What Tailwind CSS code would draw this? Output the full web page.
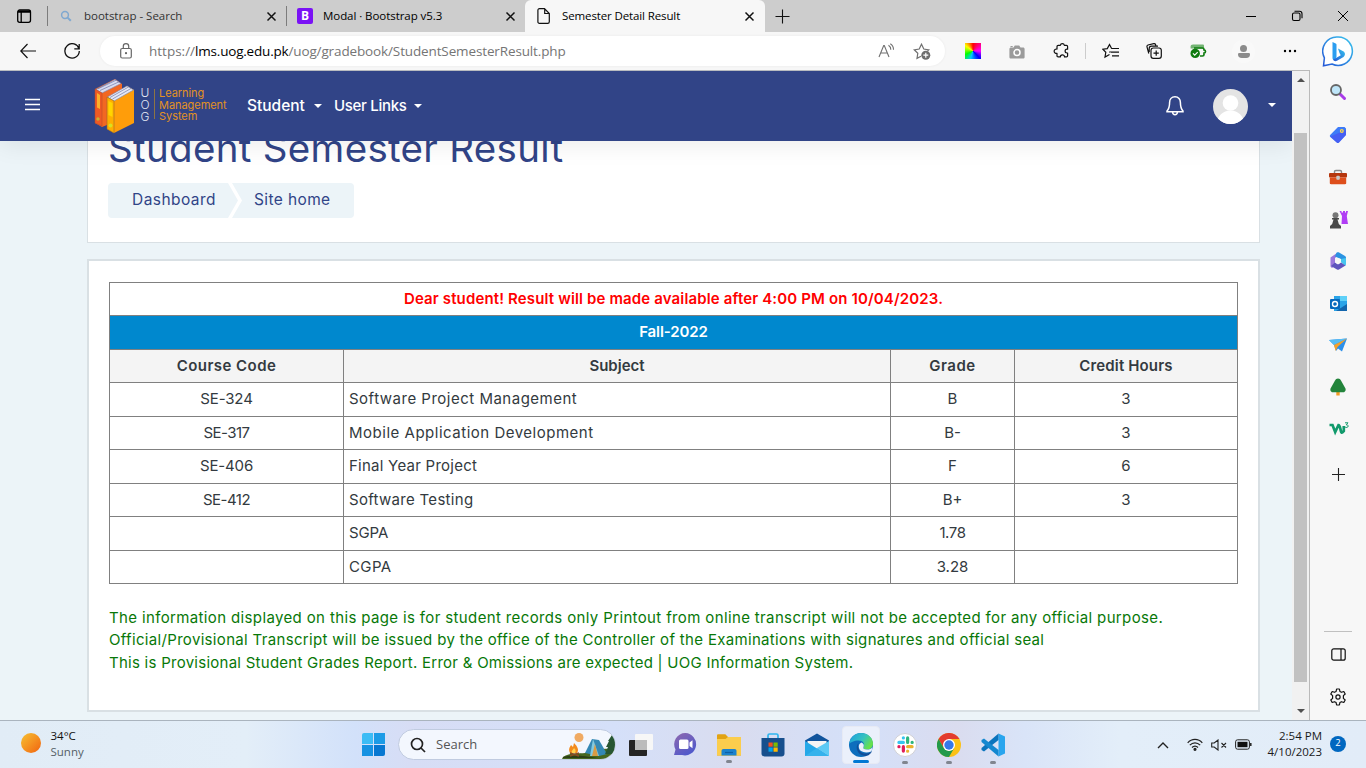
<!DOCTYPE html>
<html lang="en">
<head>
<meta charset="utf-8">
<title>Semester Detail Result</title>
<script src="https://cdn.jsdelivr.net/npm/@tailwindcss/browser@4"></script>
</head>
<body class="flex h-[768px] w-[1366px] flex-col overflow-hidden bg-[#f7f7f7] font-['Open_Sans',sans-serif] text-black">

<!-- Tab strip -->
<div class="flex h-8 shrink-0 bg-[#cdcdcd] text-[11.5px] whitespace-nowrap">
  <div class="flex w-[47px] items-center pl-4">
    <svg class="size-4" viewBox="0 0 16 16" fill="none" stroke="#000" stroke-width="1.3"><rect x="1.7" y="2" width="12.8" height="12.3" rx="2"/><path d="M2 4h12.4M2 3.2h12.4M5.2 4v10" /></svg>
  </div>
  <div class="my-1.5 w-px bg-[#7c7c7c]"></div>
  <div class="flex w-[238px] items-center">
    <svg class="ml-3 size-3" viewBox="0 0 12 12" fill="none" stroke="#7fa8d0" stroke-width="1.5"><circle cx="5" cy="5" r="3.4"/><path d="M7.6 7.6l3.2 3.2" stroke-width="2"/></svg>
    <span class="ml-3 w-[182px] tracking-[-0.02px] text-[#333]">bootstrap - Search</span>
    <svg class="size-[11px]" viewBox="0 0 11 11" stroke="#111" stroke-width="1.5"><path d="M1.5 1.5l8 8M9.5 1.5l-8 8"/></svg>
  </div>
  <div class="my-1.5 w-px bg-[#7c7c7c]"></div>
  <div class="flex w-[238px] items-center">
    <div class="ml-2.5 flex size-4 items-center justify-center rounded-[2px] bg-[#7a12f5] text-[12px] font-bold text-white">B</div>
    <span class="ml-2.5 w-[182px] tracking-[-0.06px]">Modal · Bootstrap v5.3</span>
    <svg class="size-[11px]" viewBox="0 0 11 11" stroke="#111" stroke-width="1.5"><path d="M1.5 1.5l8 8M9.5 1.5l-8 8"/></svg>
  </div>
  <div class="flex w-[240px] items-center rounded-t-md bg-[#f7f7f7]">
    <svg class="ml-3 h-4 w-[13px]" viewBox="0 0 13 16" fill="none" stroke="#111" stroke-width="1.2"><path d="M2.5.7h5L12.3 5.5v8.2c0 1-.6 1.6-1.6 1.6H2.5c-1 0-1.6-.6-1.6-1.6V2.3C.9 1.3 1.5.7 2.5.7zM7.7.9v4.6h4.4"/></svg>
    <span class="ml-3 w-[182px] tracking-[-0.12px]">Semester Detail Result</span>
    <svg class="size-[11px]" viewBox="0 0 11 11" stroke="#111" stroke-width="1.5"><path d="M1.5 1.5l8 8M9.5 1.5l-8 8"/></svg>
  </div>
  <div class="flex flex-1 items-center pl-[10px]">
    <svg class="size-[15px]" viewBox="0 0 15 15" stroke="#111" stroke-width="1.1"><path d="M7.5.5v14M.5 7.5h14"/></svg>
  </div>
  <div class="flex items-center pr-[17px]">
    <svg class="size-3" viewBox="0 0 12 12" stroke="#000" stroke-width="1"><path d="M1 6.5h10"/></svg>
    <svg class="ml-[34px] size-3" viewBox="0 0 12 12" fill="none" stroke="#000" stroke-width="1.1"><rect x="1.5" y="3" width="7.5" height="7.5" rx="1.5"/><path d="M3.5 1.2h5c1.6 0 2.5 1 2.5 2.5v4.5"/></svg>
    <svg class="ml-[34px] size-3" viewBox="0 0 12 12" stroke="#000" stroke-width="1"><path d="M1 1l10 10M11 1L1 11"/></svg>
  </div>
</div>

<!-- Toolbar -->
<div class="flex h-[38px] shrink-0 items-center bg-[#f7f7f7]">
  <svg class="ml-5 size-4" viewBox="0 0 16 16" fill="none" stroke="#111" stroke-width="1.2"><path d="M7.5 1L.8 8l6.7 7M.8 8H16"/></svg>
  <svg class="ml-7 size-4" viewBox="0 0 16 16" fill="none" stroke="#111" stroke-width="1.3"><path d="M15 5.8A7.2 7.2 0 1 0 15.3 8M15.2 1v4.9h-4.9"/></svg>
  <div class="ml-5 flex h-[30px] w-[845px] items-center rounded-full bg-white shadow-[0_0_3px_rgba(0,0,0,0.06)]">
    <svg class="ml-5 h-4 w-3" viewBox="0 0 12 16" fill="none" stroke="#666" stroke-width="1.2"><rect x=".7" y="5.5" width="10.6" height="9.5" rx="1.5"/><path d="M3.3 5.5V3.3a2.7 2.7 0 0 1 5.4 0v2.2"/><circle cx="6" cy="10.2" r=".5" fill="#666"/></svg>
    <div class="ml-[17px] w-[729px] text-[13.5px] whitespace-nowrap text-[#757575]"><span>https://</span><span class="tracking-[-0.2px] text-black">lms.uog.edu.pk</span><span class="tracking-[-0.13px]">/uog/gradebook/StudentSemesterResult.php</span></div>
    <svg class="h-4 w-[17px]" viewBox="0 0 17 16" fill="none" stroke="#707070" stroke-width="1.1"><path d="M1 14L5.7 2.5h.6L11 14M2.7 10h6.6M10.5 2.2a5 5 0 0 1 2.3 4.5M12.3.7a7 7 0 0 1 3.2 6"/></svg>
    <svg class="ml-[18px] h-[17px] w-[18px]" viewBox="0 0 18 17" fill="none" stroke="#707070" stroke-width="1.2"><path d="M8 13.2L4 15.3l.8-5L1.2 6.8l5-.8L8.5 1.2 10.8 6l5 .8-1.3 1.3"/><circle cx="12.8" cy="12.2" r="4.5" fill="#6d6d6d" stroke="none"/><path d="M12.8 9.7v5M10.3 12.2h5" stroke="#fff"/></svg>
  </div>
  <div class="ml-[6px] flex items-center">
    <div class="flex w-11 justify-center"><div class="size-4 bg-[conic-gradient(#f00,#f0f_25%,#00f_38%,#0cf_55%,#0f0_68%,#ff0_85%,#f00)]"></div></div>
    <div class="flex w-11 justify-center"><svg class="h-[15px] w-4" viewBox="0 0 16 15"><path fill="#9b9b9b" d="M2 3.5h2.5L5.8 1.5h4.4l1.3 2H14c1 0 1.6.6 1.6 1.5v8c0 1-.6 1.5-1.6 1.5H2c-1 0-1.6-.5-1.6-1.5V5c0-.9.6-1.5 1.6-1.5zM1.5 2h2.2v1H1.5z"/><circle cx="8" cy="8.6" r="3" fill="#9b9b9b" stroke="#fff" stroke-width="1.5"/></svg></div>
    <div class="flex w-11 justify-center"><svg class="size-4" viewBox="0 0 16 16" fill="none" stroke="#111" stroke-width="1.2" stroke-linejoin="round"><path d="M4 3.5c0-.8.4-1.2 1.2-1.2H7.3a2.1 2.1 0 0 1 4.1 0h2c.8 0 1.2.4 1.2 1.2v2.7h-.6a1.9 1.9 0 0 0 0 3.8h.6v2.7c0 .8-.4 1.2-1.2 1.2h-1.900a2.100 2.100 0 0 0-4.200 0H5.200c-.8 0-1.200-.4-1.200-1.200V10.300a2.200 2.200 0 1 1 0-4.200z"/></svg></div>
    <div class="flex w-[5px] justify-center"><div class="h-4 w-px bg-[#ccc]"></div></div>
    <div class="flex w-11 justify-center"><svg class="h-4 w-[17px]" viewBox="0 0 17 16" fill="none" stroke="#111" stroke-width="1.2"><path d="M7.5 11.5L3 14l.8-4.7L.8 6.2l4.5-.6L7.5 1.5l2.1 4M9.5 5.5H17M9 9.2h8M10 12.8h7M7.5 9.5l1-1"/></svg></div>
    <div class="flex w-11 justify-center"><svg class="size-4" viewBox="0 0 16 16" fill="none" stroke="#111" stroke-width="1.2"><rect x="5" y="5" width="10.3" height="10.3" rx="2.3"/><path d="M10.2 7.5v5.3M7.5 10.2h5.3M2.8 10.5L1 3.8C.8 2.9 1.2 2.3 2 2L7.8.7c.9-.2 1.5.2 1.8 1l.5 1.6M3.2 9V5.5c0-1.5.8-2.3 2.3-2.3H12"/></svg></div>
    <div class="flex w-11 justify-center"><svg class="h-4 w-[17px]" viewBox="0 0 17 16"><path d="M3 1.5h9.5c1 0 1.5.5 1.5 1.4v2.6H.6V3.5c0-1.3.9-2 2.4-2z" fill="#73b473"/><path d="M4 5h8.5c1 0 1.5.5 1.5 1.5V7c2 0 2 3 0 3v1.5c0 1-.5 1.5-1.5 1.5H10" fill="none" stroke="#107c10" stroke-width="1.7"/><circle cx="5.2" cy="10.4" r="4.7" fill="#107c10"/><path d="M3 10.4l1.7 1.7 3-3" fill="none" stroke="#fff" stroke-width="1.2"/></svg></div>
    <div class="flex w-[47px] justify-center"><div class="flex size-[23px] flex-col items-center justify-center gap-px rounded-full bg-[#f9f9f9]"><div class="size-[7px] rounded-full bg-[#8c8c8c]"></div><div class="h-[5px] w-3 rounded-t-xs rounded-b-md bg-[#8c8c8c]"></div></div></div>
    <div class="flex w-[46px] justify-center"><svg class="h-1 w-[14px]" viewBox="0 0 14 4"><circle cx="2" cy="2" r="1.2"/><circle cx="7" cy="2" r="1.2"/><circle cx="12" cy="2" r="1.2"/></svg></div>
  </div>
  <svg class="ml-[9px] h-[33px] w-[32px] shrink-0" viewBox="0 0 32 33"><defs><linearGradient id="bg1" x1="1" y1="0" x2="0" y2="1"><stop offset="0" stop-color="#38c5ee"/><stop offset="1" stop-color="#2456d6"/></linearGradient></defs><path d="M16 2a14.200 14.200 0 1 1-6 27L1.500 30.800l.9-8A14.200 14.200 0 0 1 16 2z" fill="#fff" stroke="url(#bg1)" stroke-width="1.5"/><path d="M10.500 7l3.200 1.500c.6.3.8.6.8 1.200V22l-1.500 3.500c-1.500 0-2.500-1-2.500-2.500z" fill="#2b9df0"/><path d="M16 13.500l5.200 2.800c2.300 1.300 2.300 4.300.3 5.600L15 25.800c-1.700.9-3 .3-4-1l7.800-4.600-1.300-2.200z" fill="url(#bg1)"/></svg>
</div>

<div class="flex h-[650px] shrink-0">
  <!-- Page -->
  <div class="flex h-[650px] w-[1292px] flex-col overflow-hidden border-t border-[#b9bcc0] bg-[#ecf4f8] font-['Inter',sans-serif] text-[15px] leading-[22.5px]">
    <div class="relative z-10 flex h-[70px] shrink-0 items-center bg-[#314487] text-white shadow-[0_4px_24px_rgba(0,0,0,0.08)]">
      <svg class="mb-[3px] ml-[25px] h-[13px] w-[15px]" viewBox="0 0 15 13" stroke="#fff" stroke-width="1.4"><path d="M0 1.5h15M0 6.5h15M0 11.5h15"/></svg>
      <svg class="ml-[54px] h-[56px] w-[41px]" viewBox="0 0 41 56">
        <path d="M1 11L21 1l7 5v35L8 49l-7-4z" fill="#f26722"/><path d="M2 11.5L21 1.5l6 4L8 15z" fill="#d9dcef" stroke="#7b83ae" stroke-width=".6"/><path d="M4 10.8L22.5 2M6 12.5L25 3.8" stroke="#6f79aa" stroke-width=".7"/>
        <path d="M1 11l7 4v33l-7-3z" fill="#ee5a24" stroke="#b34a2b" stroke-width=".5"/><path d="M3 15l3 2v14l-3-1.5z" fill="#fbb12a"/>
        <path d="M13 20L33 8l7 4v33L20 55l-7-4z" fill="#ff9d0a"/><path d="M13.5 19L33 8l6.5 4L20 23z" fill="#e5e8f5" stroke="#7b83ae" stroke-width=".6"/><path d="M16 19.5L34.5 9M18.5 21L37 10.5" stroke="#6f79aa" stroke-width=".7"/>
        <path d="M13 19l7 4v32l-7-4z" fill="#ffae00" stroke="#9a6a2a" stroke-width=".6"/><path d="M14.5 23l4 2v14l-4-2z" fill="#ffd500"/><circle cx="4" cy="41" r="1.7" fill="#c9b032"/><circle cx="16.5" cy="47.5" r="2" fill="#d9e021"/>
      </svg>
      <div class="mb-[2px] ml-[4px] flex w-3 flex-col items-center text-[12px] leading-[12px] font-light text-[#e3e6f3]"><span>U</span><span>O</span><span>G</span></div>
      <div class="mb-1 ml-[3px] h-[30px] w-px bg-[#8d7444]"></div>
      <div class="mb-px ml-[4px] flex w-[70px] flex-col text-[11px] leading-[11.7px] tracking-[-0.05px] text-[#e3921f]"><span>Learning</span><span>Management</span><span>System</span></div>
      <div class="ml-[18px] flex shrink-0 items-center font-medium">
        <span class="w-[67px] text-[15.5px]">Student</span>
        <span class="border-x-4 border-t-4 border-x-transparent border-t-white"></span>
        <span class="ml-[12px] w-[80px] tracking-[-0.3px]">User Links</span>
        <span class="border-x-4 border-t-4 border-x-transparent border-t-white"></span>
      </div>
      <svg class="ml-[744px] h-5 w-[18px] shrink-0" viewBox="0 0 18 20" fill="none" stroke="#fff" stroke-width="1.5"><path d="M9 .8C5.5.8 3.600 3.500 3.600 6.500c0 5-1 6.800-2.600 8.500v.7h16V15c-1.600-1.700-2.600-3.500-2.600-8.500C14.400 3.500 12.500.8 9 .8zM6.500 16c.2 1.800 1.200 2.700 2.500 2.700s2.300-.9 2.500-2.700"/></svg>
      <svg class="ml-[29px] size-[35px] shrink-0" viewBox="0 0 35 35"><defs><clipPath id="av"><circle cx="17.5" cy="17.5" r="17.5"/></clipPath></defs><g clip-path="url(#av)"><path fill="#e4e4e4" d="M0 0h35v35H0z"/><circle cx="17.5" cy="14" r="7.8" fill="#fff"/><path d="M4 35c0-8 6-13.500 13.500-13.500S31 27 31 35z" fill="#fff"/></g></svg>
      <span class="mb-[3px] ml-5 border-x-4 border-t-4 border-x-transparent border-t-white"></span>
    </div>

    <div class="mx-[87px] h-[102px] w-[1173px] shrink-0 border border-t-0 border-[#d9e0e4] bg-white px-5">
      <h1 class="-mt-[18px] h-[60px] text-[38.5px] leading-[50px] tracking-[0.32px] text-[#314487]">Student Semester Result</h1>
      <div class="flex h-[35px] text-[15.5px] text-[#314487]">
        <div class="flex w-[130px] items-center rounded-l-sm bg-[#ecf4f8] pl-6 tracking-[0.45px] [clip-path:polygon(0_0,120px_0,100%_50%,120px_100%,0_100%)]">Dashboard</div>
        <div class="-ml-[6px] flex w-[122px] items-center rounded-r-sm bg-[#ecf4f8] pl-[22px] tracking-[0.38px] [clip-path:polygon(0_0,100%_0,100%_100%,0_100%,10px_50%)]">Site home</div>
      </div>
    </div>

    <div class="mx-[87px] mt-[16px] h-[453px] w-[1173px] shrink-0 border-2 border-[#d9e0e4] bg-white px-5 pt-[21px] text-[#333a40]">
      <table class="w-[1128px] table-fixed border-collapse text-center [&_td]:border [&_td]:border-[#808080] [&_td]:p-0 [&_th]:border [&_th]:border-[#808080] [&_th]:p-0 [&_th]:font-semibold">
        <colgroup><col class="w-[234px]"><col class="w-[547px]"><col class="w-[124px]"><col class="w-[223px]"></colgroup>
        <tr class="h-[33px]"><th colspan="4" class="tracking-[0.14px] text-[#f00]">Dear student! Result will be made available after 4:00 PM on 10/04/2023.</th></tr>
        <tr class="h-[34px] bg-[#0088ce] text-white"><th colspan="4" class="border-t-[#0088ce]! tracking-[-0.1px]">Fall-2022</th></tr>
        <tr class="h-[33px] bg-[#f4f4f4]"><th class="tracking-[0.45px]">Course Code</th><th>Subject</th><th class="tracking-[0.5px]">Grade</th><th class="tracking-[0.15px]">Credit Hours</th></tr>
        <tr class="h-[34px]"><td class="tracking-[-0.15px]">SE-324</td><td class="pl-[5px]! text-left tracking-[0.5px]">Software Project Management</td><td>B</td><td>3</td></tr>
        <tr class="h-[33px]"><td class="tracking-[-0.5px]">SE-317</td><td class="pl-[5px]! text-left tracking-[0.51px]">Mobile Application Development</td><td>B-</td><td>3</td></tr>
        <tr class="h-[34px]"><td class="tracking-[-0.15px]">SE-406</td><td class="pl-[5px]! text-left tracking-[0.25px]">Final Year Project</td><td>F</td><td>6</td></tr>
        <tr class="h-[33px]"><td class="tracking-[-0.5px]">SE-412</td><td class="pl-[5px]! text-left tracking-[0.3px]">Software Testing</td><td>B+</td><td>3</td></tr>
        <tr class="h-[34px]"><td></td><td class="pl-[5px]! text-left tracking-[-0.1px]">SGPA</td><td class="tracking-[-0.4px]">1.78</td><td></td></tr>
        <tr class="h-[33px]"><td></td><td class="pl-[5px]! text-left tracking-[0.4px]">CGPA</td><td>3.28</td><td></td></tr>
      </table>
      <div class="mt-[22.5px] whitespace-nowrap text-[#087808]">
        <p class="tracking-[0.365px]">The information displayed on this page is for student records only Printout from online transcript will not be accepted for any official purpose.</p>
        <p class="tracking-[0.327px]">Official/Provisional Transcript will be issued by the office of the Controller of the Examinations with signatures and official seal</p>
        <p class="tracking-[0.26px]">This is Provisional Student Grades Report. Error &amp; Omissions are expected | UOG Information System.</p>
      </div>
    </div>
  </div>

  <!-- Scrollbar -->
  <div class="flex w-[18px] flex-col border-t border-r border-[#b9b9b9] bg-[#f1f1f1]">
    <div class="flex h-[18px] items-center justify-center"><span class="border-x-4 border-b-4 border-x-transparent border-b-[#505050]"></span></div>
    <div class="mt-11 ml-0.5 h-[549px] w-[13px] bg-[#c1c1c1]"></div>
    <div class="flex flex-1 items-end justify-center pb-[7px]"><span class="border-x-4 border-t-4 border-x-transparent border-t-[#505050]"></span></div>
  </div>

  <!-- Sidebar -->
  <div class="flex w-[56px] flex-col items-center pt-px">
    <div class="flex h-[42px] items-center"><svg class="size-[18px]" viewBox="0 0 18 18"><path d="M11 11l4.5 4.5" stroke="#a83be8" stroke-width="3" stroke-linecap="round"/><circle cx="7" cy="7" r="5" fill="#bfe6f9" stroke="#666" stroke-width="1.8"/></svg></div>
    <div class="flex h-[42px] items-center pt-0.5"><svg class="size-[18px]" viewBox="0 0 18 18"><path d="M9 1h6.500L17 2.500V9l-7 7.500c-.8.7-1.600.7-2.300 0L1.300 11c-.6-.7-.6-1.500.1-2.200z" fill="#3d7bf8"/><path d="M1.300 10.500L17 4v5l-7 7.500c-.8.7-1.600.7-2.300 0z" fill="#4b4cf0" opacity=".6"/><circle cx="12.8" cy="5" r="2" fill="#ffd84a"/><circle cx="12.8" cy="5" r=".8" fill="#4474d8"/></svg></div>
    <div class="flex h-[42px] items-center pt-0.5"><svg class="h-4 w-[18px]" viewBox="0 0 18 16"><path d="M5.500 4.500V2.700C5.500 1.900 6 1.500 6.800 1.500h4.400c.8 0 1.300.4 1.300 1.200v1.800" fill="none" stroke="#888" stroke-width="1.4"/><rect y="4" width="18" height="4.5" rx="1" fill="#b5360d"/><path d="M.8 8.500h16.400V14c0 .8-.4 1.200-1.200 1.200H2c-.8 0-1.200-.4-1.200-1.200z" fill="#de4f1c"/><rect x="7.300" y="6.800" width="3.500" height="4" rx="1" fill="#c8c8c8"/></svg></div>
    <div class="flex h-[42px] items-center pt-0.5"><svg class="size-[19px]" viewBox="0 0 19 19"><path d="M10.500 1h2v1.500H14V1h2v1.500h1V1h2l-1.200 5 .7 5 .5 3h-6.500l.5-8z" fill="#b13df5"/><circle cx="6.500" cy="5.300" r="3" fill="#777"/><path d="M3 8h7v1.500H8.500l1.300 4.500 2.200 2v2.500H1V16l2.200-2 1.300-4.500H3z" fill="#4a4a4a"/></svg></div>
    <div class="flex h-[42px] items-center pt-0.5"><svg class="size-[18px]" viewBox="0 0 18 18"><path d="M1.500 5.500L8 1l3 1-5 4v7.500l-3 2.500-1.500-1.500z" fill="#9b78dd"/><path d="M7.500.8C8.500.2 9.500.2 10.500.8L16 4c.8.5 1 1 1 2v6l-5-2V7L6 4.500z" fill="#2b93e2"/><path d="M17 6v6c0 1-.3 1.500-1 2l-4-4V7z" fill="#46c5ef"/><path d="M16.500 13.500l-6.500 4c-.7.4-1.300.4-2 0L2 14l4-3.500 3 2 3-2z" fill="#5f55bd"/><circle cx="9" cy="9" r="2.8" fill="#f7f7f7"/></svg></div>
    <div class="flex h-[42px] items-center pt-0.5"><svg class="size-[17px]" viewBox="0 0 17 17"><path d="M4 1h13v15H4z" fill="#2aa4e8"/><path d="M10 1h7v5h-7z" fill="#5ed0f8"/><path d="M17 9v7H6z" fill="#1265ad"/><rect y="4" width="10" height="10" rx="1" fill="#0869bd"/><circle cx="5" cy="9" r="2.500" fill="none" stroke="#fff" stroke-width="1.4"/></svg></div>
    <div class="flex h-[42px] items-center pt-0.5"><svg class="h-[14px] w-[18px]" viewBox="0 0 18 14"><path d="M0 2L18 .5 13 13.500 9 10.500 7 13 5 7z" fill="#2c8fea"/><path d="M0 2L18 .5 5 7z" fill="#56bdf5"/><path d="M18 .5L5 7l1.700 6L8.500 9z" fill="#f5a12a"/></svg></div>
    <div class="flex h-[42px] items-center pt-0.5"><svg class="h-[18px] w-4" viewBox="0 0 16 18"><path d="M6.300 13h3.400v4.500H6.300z" fill="#f29b25"/><path d="M8 .5c1.500 0 2.200.8 2.800 1.800l4.400 7.700c1.200 2.200 0 4.300-2.400 4.300H3.200C.8 14.300-.4 12.200.8 10l4.400-7.700C5.800 1.300 6.500.5 8 .5z" fill="#23843b"/></svg></div>
    <div class="flex h-[42px] items-center pt-0.5 pl-0.5"><svg class="h-[14px] w-5" viewBox="0 0 20 14" fill="none" stroke="#129a6c"><path d="M.5 3h3l2.700 7L9.500 3c1.500 0 1.500 3 2.500 6.500.7 2 1.500 1 2.800-.5V4" stroke-width="2.7"/><path d="M16 .8H19l-1.800 2c1.500 0 2 .6 2 1.300 0 1.500-2.500 1.800-3.200.8" stroke-width="1"/></svg></div>
    <div class="flex h-[51px] items-center"><svg class="size-[13px]" viewBox="0 0 13 13" stroke="#222" stroke-width="1.1"><path d="M6.500 0v13M0 6.500h13"/></svg></div>
    <div class="flex-1"></div>
    <div class="h-px w-7 shrink-0 bg-[#c0c0c0]"></div>
    <svg class="mt-[16px] h-[13px] w-[15px] shrink-0" viewBox="0 0 15 13" fill="none" stroke="#111" stroke-width="1.2"><rect x=".8" y=".8" width="13.4" height="11.4" rx="2"/><path d="M10 1v11"/></svg>
    <svg class="mt-[27px] mb-[14px] size-[18px] shrink-0" viewBox="0 0 18 18" fill="none" stroke="#111" stroke-width="1.2" stroke-linejoin="round"><circle cx="9" cy="9" r="2.1"/><path d="M7.600 1h2.800l.5 2.400 1.600.9 2.300-.8 1.400 2.500-1.800 1.600v2.800l1.800 1.600-1.400 2.500-2.300-.8-1.600.9-.5 2.400H7.600l-.5-2.400-1.600-.9-2.300.8L1.800 12l1.800-1.600V7.600L1.800 6l1.400-2.500 2.300.8 1.600-.9z"/></svg>
  </div>
</div>

<!-- Taskbar -->
<div class="flex h-12 shrink-0 items-center border-t border-[#aab4be] bg-[linear-gradient(90deg,#e1ecf6_0,#e3eef8_18%,#d2e1fa_26%,#d7ddf5_30%,#d5e0f9_45%,#d9dcef_54%,#d4e0f9_63%,#dadcef_70%,#d9e4f8_75%,#e3eef9_82%,#e2ecf8_100%)] text-[11.5px] whitespace-nowrap">
  <div class="mb-[3px] ml-[21px] size-5 shrink-0 rounded-full bg-linear-to-br from-[#f4c032] to-[#f0600d]"></div>
  <div class="mb-[2px] ml-[9.5px] w-[300.5px] shrink-0 leading-4"><div class="text-[#111]">34°C</div><div class="text-[#555e66]">Sunny</div></div>
  <div class="flex w-11 shrink-0 justify-center"><div class="grid size-[23px] grid-cols-2 gap-px"><i class="rounded-tl-xs bg-[#3cbcf5]"></i><i class="bg-[#1c9be6]"></i><i class="bg-[#1692e2]"></i><i class="rounded-br-xs bg-[#0777d1]"></i></div></div>
  <div class="ml-[3px] flex h-[31px] w-[218px] shrink-0 items-center overflow-hidden rounded-full border border-[#c0cbe0] bg-[#f3f7fe]">
    <svg class="ml-[11px] size-4 shrink-0" viewBox="0 0 16 16" fill="none" stroke="#222" stroke-width="1.7"><circle cx="7" cy="7" r="5.500"/><path d="M11 11l4 4"/></svg>
    <span class="ml-[10px] w-[126px] shrink-0 text-[13px] text-[#555]">Search</span>
    <svg class="h-[29px] w-[56px] shrink-0" viewBox="0 0 56 29"><path d="M1 27c7-5 16-3 22-4 12-5 24-5 33-3v9H0z" fill="#46671f"/><path d="M1 27c12-3 20-1 35 1H1z" fill="#2b3f15"/><circle cx="17" cy="7.500" r="4.500" fill="#f0aa62"/><path d="M12 13c4 4 5 7 3 10H8c-2-4 0-6 1-8l2 2z" fill="#f38b1d"/><path d="M12 18c2 2 2 3 1 5h-3c-1-2 1-3 2-5z" fill="#ffd252"/><path d="M8 23l9 3M17 23l-9 3" stroke="#884c22" stroke-width="1.5"/><path d="M30 9l7 1 8 14-8 2-14-3z" fill="#3488b4"/><path d="M31 9l6 17h-9z" fill="#83c9df"/><path d="M33 14l3 12h-6z" fill="#d99b44"/><path d="M50 5l5 6h-2l4 6h-3l4 7H43l3-7h-2l3-6h-1z" fill="#275633"/></svg>
  </div>
  <div class="ml-[3px] flex w-11 justify-center"><svg class="h-[22px] w-6" viewBox="0 0 24 22"><rect y="6" width="18" height="16" rx="1" fill="#252525"/><rect x="6" width="18" height="16" rx="1" fill="#f7f7f7"/><path d="M6 6h12v10H6z" fill="#bcbcbc"/></svg></div>
  <div class="flex w-11 justify-center"><svg class="size-[23px]" viewBox="0 0 23 23"><defs><linearGradient id="ch" x2=".6" y2="1"><stop stop-color="#8f68ae"/><stop offset="1" stop-color="#5059cb"/></linearGradient></defs><path d="M11.500 0A11.200 11.200 0 1 1 8 22H0l1.500-5.500A11.200 11.200 0 0 1 11.500 0z" fill="url(#ch)"/><rect x="5" y="6.500" width="9.500" height="9.500" rx="1.5" fill="#fff"/><path d="M15.500 9.500l3-2.200v8l-3-2.200z" fill="#fff"/></svg></div>
  <div class="relative flex w-11 justify-center"><svg class="h-[22px] w-6" viewBox="0 0 24 22"><path d="M0 1.500C0 .7.600.3 1.300.3h7L11 3H24v18.500H0z" fill="#e2a313"/><path d="M0 5h8.500L11 3h13v17.500c0 .7-.4 1-1 1H1c-.6 0-1-.3-1-1z" fill="#fbcd4d"/><path d="M4.500 21.500V17c0-1.300.7-2 2-2h11c1.300 0 2 .7 2 2v4.500z" fill="#1b82ce"/><path d="M8 18.500h8" stroke="#0d5fa5" stroke-width="1.2"/></svg><i class="absolute -bottom-[7px] h-[3px] w-1.5 rounded-full bg-[#81858f]"></i></div>
  <div class="flex w-11 justify-center"><svg class="size-6" viewBox="0 0 24 24"><path d="M7 6V2.500C7 1.500 7.500 1 8.500 1h7c1 0 1.500.5 1.500 1.500V6" fill="none" stroke="#2eb5ef" stroke-width="1.7"/><path d="M.5 5h23v15.500c0 2-1.200 3-3 3h-17c-1.800 0-3-1-3-3z" fill="#174f8d"/><path d="M7.500 9.500h4.200v4.200H7.500z" fill="#f25022"/><path d="M12.500 9.500h4.200v4.200h-4.200z" fill="#7fba00"/><path d="M7.500 14.500h4.200v4.200H7.500z" fill="#00a4ef"/><path d="M12.500 14.500h4.200v4.200h-4.200z" fill="#ffb900"/></svg></div>
  <div class="flex w-11 justify-center"><svg class="size-6" viewBox="0 0 24 24"><path d="M0 7.500L12 .5l12 7v5H0z" fill="#11549c"/><path d="M2.500 8h19v4L12 16l-9.500-4z" fill="#f5f5f5"/><path d="M0 8v15h24z" fill="#25a8e8"/><path d="M24 8v15L12 15z" fill="#5ccaf5"/><path d="M0 23l12-8 12 8z" fill="#35b2ec"/></svg></div>
  <div class="relative mx-[3px] flex size-[38px] items-center justify-center rounded-sm border border-[#e7eaf4] bg-[#ebf0fb]"><svg class="size-6" viewBox="0 0 24 24"><defs><linearGradient id="e1" x2="1" y2=".5"><stop stop-color="#1b9de0"/><stop offset=".6" stop-color="#35c2c0"/><stop offset="1" stop-color="#66e04b"/></linearGradient></defs><circle cx="12" cy="12" r="12" fill="#0d6ebd"/><path d="M.2 11C1 4.500 6 0 12 0c7 0 12 5 12 10.500 0 4-3 6-6 6-3.500 0-4.300-1.500-3.500-2.500C16.500 11 14 7.500 9.500 7.500 5 7.500 1.300 9.500.2 11z" fill="url(#e1)"/><path d="M9.500 10c-2 5 1.500 10.500 7 10.500 2.500 0 4.500-.8 6-2.300l.5.300c-.8 1.500-2 2.800-3.500 3.800-9 3.200-15-7-10-12.300z" fill="#124e98"/><path d="M12.500 9.500c2.500 1 2.700 3 2 4.500-.8 1.300.3 2.600 3.500 2.600 2.500 0 4.300-.9 5.400-2.300-.2 2-.7 3.200-1.300 4.200-5 2-12.300.8-12.300-5 0-2 1-3.300 2.700-4z" fill="#ebf0fb"/></svg><i class="absolute bottom-0 h-[3px] w-4 rounded-full bg-[#0078d4]"></i></div>
  <div class="relative flex w-11 justify-center"><div class="flex size-6 items-center justify-center rounded-full border border-[#d0d0d6] bg-white"><svg class="size-[17px]" viewBox="0 0 16 16" stroke-width="3" stroke-linecap="round"><path d="M6 1.700v.1M6 6H1.800" stroke="#36c5f0"/><path d="M10 1.800V6M14.200 6h.1" stroke="#2eb67d"/><path d="M10 10h4.200M10 14.200v.1" stroke="#ecb22e"/><path d="M6 10v4.200M1.800 10h.1" stroke="#e01e5a"/></svg></div><i class="absolute -bottom-[7px] h-[3px] w-1.5 rounded-full bg-[#81858f]"></i></div>
  <div class="relative flex w-11 justify-center"><svg class="size-6" viewBox="0 0 24 24"><circle cx="12" cy="12" r="12" fill="#fbc116"/><path d="M1.600 6A12 12 0 0 1 22.400 6H12L6.800 15z" fill="#e33b2e"/><path d="M1.600 6L6.800 15l5.200 3 5.200-3L12 24A12 12 0 0 1 1.600 6z" fill="#229a4a"/><circle cx="12" cy="12" r="6" fill="#fff"/><circle cx="12" cy="12" r="4.7" fill="#3478e8"/></svg><i class="absolute -bottom-[7px] h-[3px] w-1.5 rounded-full bg-[#81858f]"></i></div>
  <div class="relative flex w-11 justify-center"><svg class="size-6" viewBox="0 0 24 24"><path d="M17.500.5L24 3.500v17l-6.500 3z" fill="#2aa5ee"/><path d="M17.500.5v6.500L3 18.500.5 17v-2z" fill="#0a74bd"/><path d="M17.500 23.500V17L3 5.500.5 7v2z" fill="#1488d0"/></svg><i class="absolute -bottom-[7px] h-[3px] w-1.5 rounded-full bg-[#81858f]"></i></div>
  <div class="flex-1"></div>
  <svg class="h-2 w-3" viewBox="0 0 12 8" fill="none" stroke="#222" stroke-width="1.4"><path d="M1 7l5-5 5 5"/></svg>
  <svg class="ml-[18px] h-[13px] w-4" viewBox="0 0 16 13" fill="none" stroke="#222" stroke-width="1.2"><path d="M.7 4.800c4-4.600 10.600-4.600 14.600 0M2.800 7.200c3-3.200 7.400-3.200 10.400 0M5 9.500c1.800-1.900 4.200-1.900 6 0"/><circle cx="8" cy="11.300" r="1" fill="#222"/></svg>
  <svg class="ml-2 h-3 w-4" viewBox="0 0 16 12" fill="none" stroke="#222" stroke-width="1.1"><path d="M.7 4v4h2.500L7 11V1L3.200 4zM10.500 4l4.500 4.500M15 4l-4.500 4.500"/></svg>
  <svg class="ml-2 h-[11px] w-[17px]" viewBox="0 0 17 11" fill="none" stroke="#222"><rect x=".6" y=".8" width="13.8" height="9.4" rx="2"/><path d="M2.500 2.800h10v5.400h-10z" fill="#111" stroke="none"/><path d="M15.800 4v3" stroke-width="1.5"/></svg>
  <div class="mb-[2px] ml-4 text-right leading-4 text-[#1a1a1a]"><div>2:54 PM</div><div>4/10/2023</div></div>
  <div class="mr-5 mb-[2px] ml-2 flex size-4 items-center justify-center rounded-full bg-[#0067c0] text-[9.5px] text-white">2</div>
</div>
</body>
</html>
